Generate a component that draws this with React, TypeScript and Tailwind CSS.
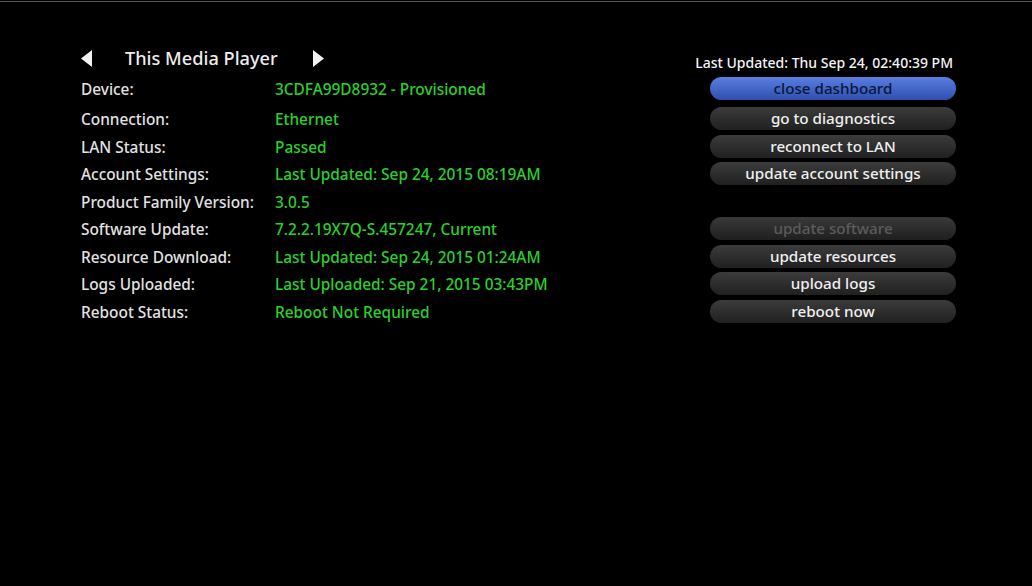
import { Fragment } from "react";

type Row = {
  label: string;
  value: string;
  action?: string;
  disabled?: boolean;
  primary?: boolean;
};

const rows: Row[] = [
  { label: "Device:", value: "3CDFA99D8932 - Provisioned", action: "close dashboard", primary: true },
  { label: "Connection:", value: "Ethernet", action: "go to diagnostics" },
  { label: "LAN Status:", value: "Passed", action: "reconnect to LAN" },
  { label: "Account Settings:", value: "Last Updated: Sep 24, 2015 08:19AM", action: "update account settings" },
  { label: "Product Family Version:", value: "3.0.5" },
  { label: "Software Update:", value: "7.2.2.19X7Q-S.457247, Current", action: "update software", disabled: true },
  { label: "Resource Download:", value: "Last Updated: Sep 24, 2015 01:24AM", action: "update resources" },
  { label: "Logs Uploaded:", value: "Last Uploaded: Sep 21, 2015 03:43PM", action: "upload logs" },
  { label: "Reboot Status:", value: "Reboot Not Required", action: "reboot now" },
];

function Arrow({ dir }: { dir: "left" | "right" }) {
  return (
    <svg width="11" height="17" viewBox="0 0 11 17" className="shrink-0">
      {dir === "left" ? <path d="M11 0 L0 8.5 L11 17 Z" fill="#f2f2f2" /> : <path d="M0 0 L11 8.5 L0 17 Z" fill="#f2f2f2" />}
    </svg>
  );
}

function ActionButton({ row }: { row: Row }) {
  if (!row.action) return null;
  const tone = row.primary
    ? "bg-gradient-to-b from-[#5a7fe0] to-[#2f4fb0] text-[#0a163a]"
    : row.disabled
      ? "bg-gradient-to-b from-[#3a3a3a] to-[#1f1f1f] text-[#5c5c5c]"
      : "bg-gradient-to-b from-[#3c3c3c] to-[#202020] text-[#f0f0f0]";
  return (
    <div className={`flex h-[23px] w-[246px] items-center justify-center rounded-full text-[15.2px] font-medium leading-none ${tone}`}>
      {row.action}
    </div>
  );
}

export default function App() {
  return (
    <main
      className="h-[586px] w-[1032px] overflow-hidden bg-black"
      style={{ fontFamily: '"Noto Sans", "Open Sans", sans-serif' }}
    >
      <div className="mt-px h-px w-full bg-[#555]" />

      <div className="pl-[81px]">
        <header className="flex h-[73px] items-start">
          <div className="mt-[46px] flex items-center">
            <Arrow dir="left" />
            <span className="ml-[33px] w-[188px] text-[18.2px] font-medium leading-[20px] text-[#ececec]">This Media Player</span>
            <Arrow dir="right" />
          </div>
          <p className="ml-auto mr-[79px] mt-[52px] text-[14px] font-medium leading-[18px] text-[#f4f4f4]">
            Last Updated: Thu Sep 24, 02:40:39 PM
          </p>
        </header>

        <div className="grid grid-cols-[194px_435px_246px]">
          {rows.map((row, i) => (
            <Fragment key={row.label}>
              <div className={`flex h-[27.5px] items-center pt-[2px] text-[15.4px] font-medium text-[#e2e2e2] ${i === 1 ? "mt-[2.5px]" : ""}`}>
                {row.label}
              </div>
              <div className={`flex h-[27.5px] items-center pt-[2px] text-[15.4px] font-medium text-[#2bd12b] ${i === 1 ? "mt-[2.5px]" : ""}`}>
                {row.value}
              </div>
              <div className={`flex h-[27.5px] items-center ${i === 1 ? "mt-[2.5px]" : ""}`}>
                <ActionButton row={row} />
              </div>
            </Fragment>
          ))}
        </div>
      </div>
    </main>
  );
}
